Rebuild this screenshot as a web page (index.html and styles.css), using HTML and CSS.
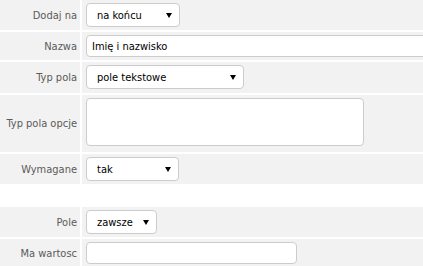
FILE: index.html
```html
<!DOCTYPE html>
<html lang="pl">
<head>
    <meta charset="UTF-8">
    <meta name="viewport" content="width=device-width, initial-scale=1.0">
    <title>Pole formularza</title>
    <link rel="stylesheet" href="styles.css">
</head>
<body>
    <!-- Ustawienia pola -->
    <div class="form-table">
        <div class="row">
            <div class="label">Dodaj na</div>
            <div class="field">
                <span class="select-wrap w-add">
                    <select><option>na końcu</option></select>
                </span>
            </div>
        </div>
        <div class="row">
            <div class="label">Nazwa</div>
            <div class="field">
                <input type="text" class="input w-name" value="Imię i nazwisko">
            </div>
        </div>
        <div class="row">
            <div class="label">Typ pola</div>
            <div class="field tall">
                <span class="select-wrap w-type">
                    <select><option>pole tekstowe</option></select>
                </span>
            </div>
        </div>
        <div class="row">
            <div class="label">Typ pola opcje</div>
            <div class="field">
                <textarea class="textarea"></textarea>
            </div>
        </div>
        <div class="row">
            <div class="label">Wymagane</div>
            <div class="field">
                <span class="select-wrap w-req">
                    <select><option>tak</option></select>
                </span>
            </div>
        </div>
    </div>

    <!-- Warunek -->
    <div class="form-table second">
        <div class="row">
            <div class="label">Pole</div>
            <div class="field">
                <span class="select-wrap w-cond">
                    <select><option>zawsze</option></select>
                </span>
            </div>
        </div>
        <div class="row">
            <div class="label">Ma wartosc</div>
            <div class="field">
                <input type="text" class="input w-value">
            </div>
        </div>
    </div>
</body>
</html>
```

FILE: styles.css
```css
body {
    margin: 0;
    background: #fff;
    font-family: "DejaVu Sans Condensed", "DejaVu Sans", Tahoma, sans-serif;
    font-size: 11px;
    overflow: hidden;
}
.form-table {
    width: 100%;
}
.form-table.second {
    margin-top: 21px;
}
.row {
    display: flex;
    background: #f2f2f2;
    border-bottom: 2px solid #fff;
}
.label {
    width: 77px;
    flex: none;
    padding-right: 3px;
    border-right: 2px solid #fff;
    display: flex;
    align-items: center;
    justify-content: flex-end;
    color: #5a5a5a;
    white-space: nowrap;
}
.field {
    flex: 1;
    padding: 3px 4px;
    display: flex;
    align-items: center;
    min-width: 0;
    overflow: hidden;
}
.field.tall {
    padding-bottom: 4px;
}
.select-wrap {
    position: relative;
    display: inline-block;
}
.select-wrap select {
    appearance: none;
    -webkit-appearance: none;
    width: 100%;
    height: 24px;
    margin: 0;
    padding: 0 20px 0 10px;
    border: 1px solid #ccc;
    border-radius: 4px;
    background: #fff;
    font-family: inherit;
    font-size: 11px;
    color: #000;
}
/* strzalka selecta */
.select-wrap::after {
    content: "";
    position: absolute;
    right: 8px;
    top: 10px;
    border-left: 3px solid transparent;
    border-right: 3px solid transparent;
    border-top: 5px solid #000;
    pointer-events: none;
}
.w-add { width: 94px; }
.w-type { width: 158px; }
.w-req { width: 93px; }
.w-cond { width: 71px; }
.input {
    height: 22px;
    margin: 0;
    padding: 0 5px;
    border: 1px solid #ccc;
    border-radius: 4px;
    box-sizing: border-box;
    background: #fff;
    font-family: inherit;
    font-size: 11px;
    color: #000;
}
.w-name { width: 360px; flex: none; }
.w-value { width: 211px; }
.textarea {
    width: 278px;
    height: 48px;
    margin: 0 0 3px;
    box-sizing: border-box;
    border: 1px solid #ccc;
    border-radius: 4px;
    resize: none;
    background: #fff;
}
```
